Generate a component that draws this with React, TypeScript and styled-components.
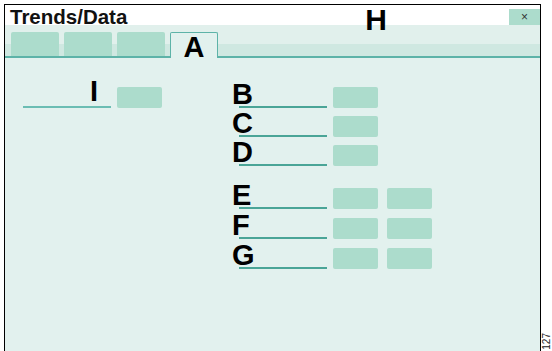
import styled, { createGlobalStyle } from 'styled-components';

const GlobalStyle = createGlobalStyle`
  html, body {
    margin: 0;
    padding: 0;
    background: #fff;
    font-family: 'Liberation Sans', Arial, sans-serif;
  }
`;

const palette = {
  body: '#e2f1ee',
  barTop: '#e1f0ec',
  barBottom: '#cfe8e1',
  line: '#5db3a8',
  fill: '#acdccc',
  underline: '#4aa597',
  underlineLight: '#6bbdb3',
};

const Page = styled.div`
  width: 552px;
  height: 351px;
  padding: 4px 0 0 4px;
  box-sizing: border-box;
  display: flex;
  overflow: hidden;
`;

const Window = styled.div`
  width: 537px;
  height: 380px;
  flex-shrink: 0;
  box-sizing: border-box;
  border: 1px solid #000;
  border-bottom: 0;
  display: flex;
  flex-direction: column;
  background: ${palette.body};
`;

const TitleBar = styled.div`
  height: 20px;
  flex-shrink: 0;
  background: #fff;
  display: flex;
  padding-left: 5px;
`;

const Title = styled.h1`
  margin: 2px 0 0;
  font-size: 20.5px;
  line-height: 20px;
  font-weight: bold;
  color: #111;
`;

const Marker = styled.span<{ $size?: number }>`
  position: relative;
  z-index: 1;
  font-size: ${p => p.$size ?? 29}px;
  font-weight: bold;
  color: #000;
`;

const TitleMarker = styled(Marker)`
  align-self: flex-start;
  line-height: 30px;
  height: 30px;
  margin-left: auto;
  margin-right: 122px;
`;

const CloseButton = styled.button`
  align-self: flex-end;
  width: 31px;
  height: 16px;
  border: 0;
  padding: 0;
  background: ${palette.fill};
  font-family: 'Liberation Sans', Arial, sans-serif;
  font-size: 12px;
  line-height: 16px;
  color: #333;
`;

const TabBar = styled.div`
  height: 31px;
  flex-shrink: 0;
  display: flex;
  align-items: flex-end;
  gap: 5px;
  padding-left: 6px;
  background: linear-gradient(
    to bottom,
    ${palette.barTop} 0 19px,
    ${palette.barBottom} 19px
  );
  border-bottom: 2px solid ${palette.line};
`;

const Tab = styled.div<{ $active?: boolean }>`
  width: 48px;
  box-sizing: border-box;
  height: ${p => (p.$active ? 26 : 24)}px;
  margin-bottom: ${p => (p.$active ? -2 : 0)}px;
  background: ${p => (p.$active ? palette.body : palette.fill)};
  border: ${p => (p.$active ? `1.5px solid ${palette.line}` : '0')};
  border-bottom: 0;
  border-radius: 2px 2px 0 0;
  display: flex;
  justify-content: center;
  position: relative;
  z-index: 1;
`;

const TabMarker = styled(Marker)`
  line-height: 29px;
  height: 26px;
`;

const Content = styled.div`
  flex: 1;
  display: grid;
  grid-template-columns: 216px auto;
  align-items: start;
  padding: 24px 0 0 18px;
`;

const Column = styled.div`
  display: flex;
  flex-direction: column;
`;

const Group = styled.div<{ $gap: number }>`
  display: flex;
  flex-direction: column;
  gap: ${p => p.$gap}px;
  & + & {
    margin-top: 17px;
  }
`;

const Row = styled.div`
  display: flex;
  align-items: flex-end;
  gap: 6px;
`;

const Field = styled.div<{ $light?: boolean; $lift?: number }>`
  width: 88px;
  height: 24px;
  border-bottom: 2px solid
    ${p => (p.$light ? palette.underlineLight : palette.underline)};
  font-size: 29px;
  font-weight: bold;
  line-height: ${p => 24 - 2 * (p.$lift ?? 0)}px;
  white-space: nowrap;
  color: #000;
`;

const Letter = styled.span<{ $shift: number }>`
  display: inline-block;
  margin-left: ${p => p.$shift}px;
`;

const Boxes = styled.div`
  display: flex;
  gap: 9px;
`;

const Box = styled.div`
  width: 45px;
  height: 21px;
  border-radius: 2px;
  background: ${palette.fill};
`;

const Side = styled.div`
  margin-left: 2px;
  display: flex;
  align-items: flex-end;
  padding-bottom: 1px;
`;

const Figure = styled.span`
  writing-mode: vertical-rl;
  transform: rotate(180deg);
  font-size: 10px;
  line-height: 8px;
  color: #222;
`;

const upperRows = ['B', 'C', 'D'];
const lowerRows = ['E', 'F', 'G'];

const FieldRow = ({ letter, boxes }: { letter: string; boxes: number }) => (
  <Row>
    <Field>
      <Letter $shift={-7}>{letter}</Letter>
    </Field>
    <Boxes>
      {Array.from({ length: boxes }).map((_, i) => (
        <Box key={i} />
      ))}
    </Boxes>
  </Row>
);

const App = () => {
  return (
    <>
      <GlobalStyle />
      <Page>
        <Window>
          <TitleBar>
            <Title>Trends/Data</Title>
            <TitleMarker $size={30}>H</TitleMarker>
            <CloseButton type="button">×</CloseButton>
          </TitleBar>
          <TabBar>
            <Tab />
            <Tab />
            <Tab />
            <Tab $active>
              <TabMarker>A</TabMarker>
            </Tab>
          </TabBar>
          <Content>
            <Column>
              <Row>
                <Field $light $lift={3}>
                  <Letter $shift={67}>I</Letter>
                </Field>
                <Box />
              </Row>
            </Column>
            <Column>
              <Group $gap={3}>
                {upperRows.map(l => (
                  <FieldRow key={l} letter={l} boxes={1} />
                ))}
              </Group>
              <Group $gap={4}>
                {lowerRows.map(l => (
                  <FieldRow key={l} letter={l} boxes={2} />
                ))}
              </Group>
            </Column>
          </Content>
        </Window>
        <Side>
          <Figure>127</Figure>
        </Side>
      </Page>
    </>
  );
};

export default App;
